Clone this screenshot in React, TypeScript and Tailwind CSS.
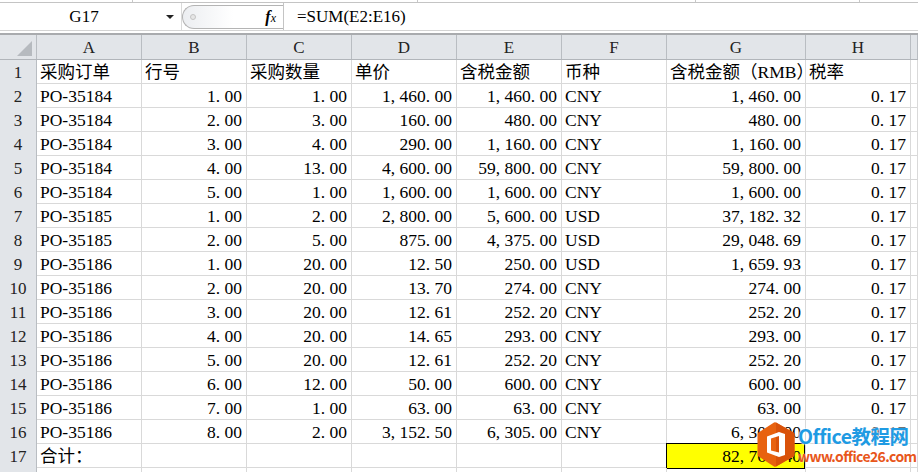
import React from "react";

const COLS = ["A", "B", "C", "D", "E", "F", "G", "H", ""];

const ROWS: string[][] = [
  ["采购订单", "行号", "采购数量", "单价", "含税金额", "币种", "含税金额（RMB）", "税率", ""],
  ["PO-35184", "1.00", "1.00", "1,460.00", "1,460.00", "CNY", "1,460.00", "0.17", ""],
  ["PO-35184", "2.00", "3.00", "160.00", "480.00", "CNY", "480.00", "0.17", ""],
  ["PO-35184", "3.00", "4.00", "290.00", "1,160.00", "CNY", "1,160.00", "0.17", ""],
  ["PO-35184", "4.00", "13.00", "4,600.00", "59,800.00", "CNY", "59,800.00", "0.17", ""],
  ["PO-35184", "5.00", "1.00", "1,600.00", "1,600.00", "CNY", "1,600.00", "0.17", ""],
  ["PO-35185", "1.00", "2.00", "2,800.00", "5,600.00", "USD", "37,182.32", "0.17", ""],
  ["PO-35185", "2.00", "5.00", "875.00", "4,375.00", "USD", "29,048.69", "0.17", ""],
  ["PO-35186", "1.00", "20.00", "12.50", "250.00", "USD", "1,659.93", "0.17", ""],
  ["PO-35186", "2.00", "20.00", "13.70", "274.00", "CNY", "274.00", "0.17", ""],
  ["PO-35186", "3.00", "20.00", "12.61", "252.20", "CNY", "252.20", "0.17", ""],
  ["PO-35186", "4.00", "20.00", "14.65", "293.00", "CNY", "293.00", "0.17", ""],
  ["PO-35186", "5.00", "20.00", "12.61", "252.20", "CNY", "252.20", "0.17", ""],
  ["PO-35186", "6.00", "12.00", "50.00", "600.00", "CNY", "600.00", "0.17", ""],
  ["PO-35186", "7.00", "1.00", "63.00", "63.00", "CNY", "63.00", "0.17", ""],
  ["PO-35186", "8.00", "2.00", "3,152.50", "6,305.00", "CNY", "6,305.00", "0.17", ""],
  ["合计：", "", "", "", "", "", "82,764.40", "", ""],
  ["", "", "", "", "", "", "", "", ""],
];

const GRID =
  "grid grid-cols-[37px_105px_105px_105px_105px_105px_105px_139px_105px_1fr]";

// SimSun gives commas and points a full half-width cell
function Num({ v }: { v: string }) {
  return (
    <>
      {v.split("").map((ch, i) =>
        ch === "," || ch === "." ? (
          <span key={i} className="inline-block w-[8.75px] text-left">
            {ch}
          </span>
        ) : (
          <span key={i}>{ch}</span>
        )
      )}
    </>
  );
}

function OfficeMark() {
  return (
    <div className="absolute left-[756px] top-[421px] flex items-center gap-[2px] pointer-events-none">
      <svg width="40" height="47" viewBox="0 0 40 47">
        <path
          d="M20 1.5 L37.5 11.5 Q38.5 12.2 38.5 13.5 V33.5 Q38.5 34.8 37.5 35.5 L20 45.5 Q19 46 18 45.5 L2.5 35.5 Q1.5 34.8 1.5 33.5 V13.5 Q1.5 12.2 2.5 11.5 L18 1.5 Q19 1 20 1.5 Z"
          fill="#e8620f"
        />
        <path d="M20 1.5 L37.5 11.5 Q38.5 12.2 38.5 13.5 V33.5 Q38.5 34.8 37.5 35.5 L20 45.5 Z" fill="#d9520a" />
        <path
          fillRule="evenodd"
          d="M11 15.5 L23 11 L29 13 V34 L23 36 L11 31.5 Z M15 17.5 L23 15 V31.5 L15 29.5 Z"
          fill="#ffffff"
        />
      </svg>
      <div className="flex flex-col font-['Noto_Sans_CJK_SC','Noto_Sans',sans-serif] font-bold leading-none">
        <span className="text-[19.5px] tracking-[-0.5px] text-[#1f9be3] [text-shadow:0_0_2px_#fff,0_0_2px_#fff]">
          Office教程网
        </span>
        <span className="mt-[4px] text-[14px] tracking-[-0.6px] text-[#e8561a] [text-shadow:0_0_2px_#fff]">
          www.office26.com
        </span>
      </div>
    </div>
  );
}

export default function App() {
  return (
    <div className="relative h-[472px] w-[918px] overflow-hidden bg-white font-['Liberation_Serif','Noto_Sans_CJK_SC',serif] text-black">
      {/* ribbon remnant */}
      <div className="flex h-[3px] border-b border-[#c4c4c4]">
        <div className="w-[133px] border-r border-[#c8c8c8]" />
        <div className="w-[285px] border-r border-[#c8c8c8]" />
        <div className="w-[278px] border-r border-[#c8c8c8]" />
        <div className="w-[164px] border-r border-[#c8c8c8]" />
      </div>

      {/* formula bar */}
      <div className="flex h-[28px] items-center border-b border-[#d4d4d4]">
        <div className="flex h-full w-[182px] items-center border-r border-[#dadada]">
          <div className="flex-1 pl-[2px] text-center text-[17px] leading-none">G17</div>
          <div className="mr-[7px] h-0 w-0 border-x-[4px] border-t-[4px] border-x-transparent border-t-[#222]" />
        </div>
        <div className="relative flex h-[24px] w-[101px] items-center rounded-l-full border border-r-0 border-[#b4b4b4] bg-gradient-to-r from-[#eceef1] via-white to-white">
          <div className="ml-[7px] h-[6px] w-[6px] rounded-full border border-[#c4c4c4] bg-[#e6e6e6]" />
          <div className="ml-auto mr-[7px] text-[16px] leading-none">
            <span className="font-bold italic">f</span>
            <span className="text-[12px] italic">x</span>
          </div>
        </div>
        <div className="flex h-full flex-1 items-center border-l border-[#c4c4c4] pl-[13px] text-[17px] leading-none">
          =SUM(E2:E16)
        </div>
      </div>
      <div className="h-[4px] border-b-2 border-[#a9abae]" />

      {/* column headers */}
      <div className={`${GRID} h-[25px] border-b border-[#b1b5ba] bg-[#e2e5e9]`}>
        <div className="relative border-r border-[#b9bdc2]">
          <div className="absolute bottom-[3px] right-[4px] h-0 w-0 border-b-[15px] border-l-[15px] border-b-[#b6babf] border-l-transparent" />
        </div>
        {COLS.map((c, i) => (
          <div
            key={i}
            className="flex items-center justify-center border-r border-[#b9bdc2] text-[17px] leading-none text-[#222]"
          >
            {c}
          </div>
        ))}
      </div>

      {/* rows */}
      {ROWS.map((row, r) => (
        <div key={r} className={`${GRID} h-[24px] border-b border-[#d9d9d9]`}>
          <div className="flex items-center justify-center border-r border-[#b9bdc2] bg-[#e2e5e9] pt-[1px] text-[17px] leading-none text-[#222]">
            {r < 17 ? r + 1 : ""}
          </div>
          {row.map((v, c) => {
            const sel = r === 16 && c === 6;
            const left = !sel && (r === 0 || r === 16 || c === 0 || c === 5);
            return (
              <div
                key={c}
                className={`relative overflow-visible whitespace-nowrap border-r border-[#d9d9d9] pt-[1px] text-[17.5px] leading-[23px] ${
                  left ? "pl-[3px] text-left" : "pr-[4px] text-right"
                } ${sel ? "bg-[#ffff00]" : ""}`}
              >
                {left ? v : <Num v={v} />}
                {sel && (
                  <div className="absolute -left-px -top-px bottom-[-1px] right-0 border-[1.5px] border-black" />
                )}
              </div>
            );
          })}
        </div>
      ))}

      <OfficeMark />
    </div>
  );
}
